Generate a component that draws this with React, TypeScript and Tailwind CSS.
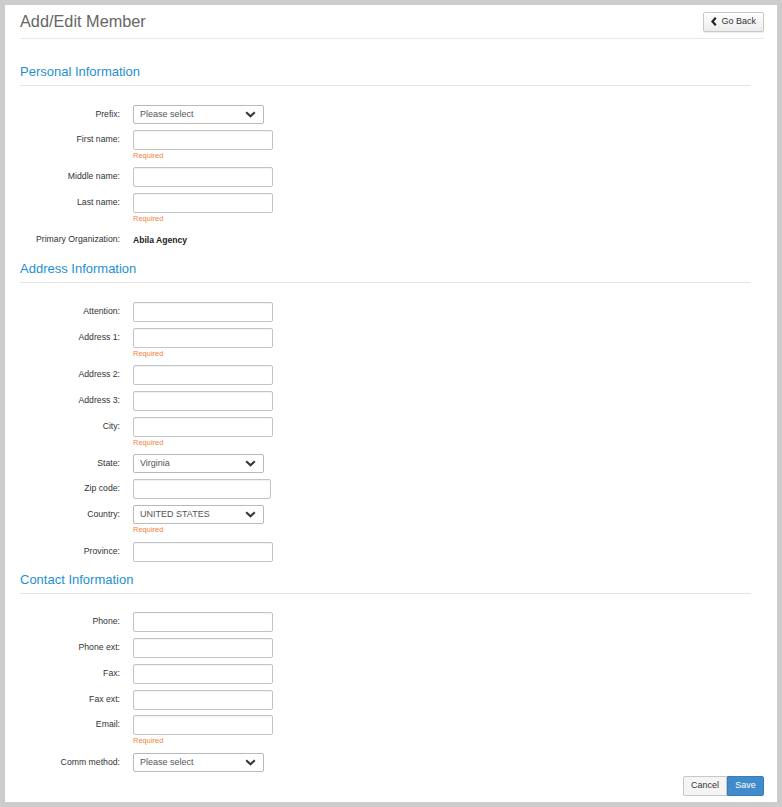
import React from "react";

type Field = {
  label: string;
  kind: "input" | "select" | "static";
  value?: string;
  required?: boolean;
  width?: string;
};

const personal: Field[] = [
  { label: "Prefix:", kind: "select", value: "Please select" },
  { label: "First name:", kind: "input", required: true },
  { label: "Middle name:", kind: "input" },
  { label: "Last name:", kind: "input", required: true },
  { label: "Primary Organization:", kind: "static", value: "Abila Agency" },
];

const address: Field[] = [
  { label: "Attention:", kind: "input" },
  { label: "Address 1:", kind: "input", required: true },
  { label: "Address 2:", kind: "input" },
  { label: "Address 3:", kind: "input" },
  { label: "City:", kind: "input", required: true },
  { label: "State:", kind: "select", value: "Virginia" },
  { label: "Zip code:", kind: "input", width: "w-[138px]" },
  { label: "Country:", kind: "select", value: "UNITED STATES", required: true },
  { label: "Province:", kind: "input" },
];

const contact: Field[] = [
  { label: "Phone:", kind: "input" },
  { label: "Phone ext:", kind: "input" },
  { label: "Fax:", kind: "input" },
  { label: "Fax ext:", kind: "input" },
  { label: "Email:", kind: "input", required: true },
  { label: "Comm method:", kind: "select", value: "Please select" },
];

const Chevron = ({ dir }: { dir: "down" | "left" }) =>
  dir === "down" ? (
    <svg width="11" height="7" viewBox="0 0 11 7" className="shrink-0">
      <path d="M1.2 1.2 L5.5 5.3 L9.8 1.2" fill="none" stroke="#3a3a3a" strokeWidth="2.2" />
    </svg>
  ) : (
    <svg width="6" height="9" viewBox="0 0 6 9" className="shrink-0">
      <path d="M4.8 0.8 L1.4 4.5 L4.8 8.2" fill="none" stroke="#222" strokeWidth="2.2" />
    </svg>
  );

const Row = ({ field }: { field: Field }) => {
  const label = (
    <div className="w-[100px] shrink-0 text-right text-[8.7px] leading-[19px] text-[#333]">{field.label}</div>
  );

  if (field.kind === "static") {
    return (
      <div className="flex h-[20px] mb-[2px] gap-[13px]">
        {label}
        <div className="text-[8.6px] font-bold leading-[20px] text-[#222]">{field.value}</div>
      </div>
    );
  }

  return (
    <div className="flex gap-[13px]">
      {label}
      <div className="flex flex-col">
        {field.kind === "select" ? (
          <div className="mt-[0.5px] flex h-[19px] w-[131px] items-center justify-between rounded-[2px] border border-[#b9b9b9] bg-white pl-[6px] pr-[7px]">
            <span className="text-[9px] text-[#555]">{field.value}</span>
            <Chevron dir="down" />
          </div>
        ) : (
          <div
            className={`h-[20px] ${field.width ?? "w-[140px]"} rounded-[2px] border border-[#c4c4c4] bg-white shadow-[inset_0_1px_1px_rgba(0,0,0,0.06)]`}
          />
        )}
        {field.required && <div className="text-[7.5px] leading-[11.5px] text-[#f5823c]">Required</div>}
      </div>
    </div>
  );
};

const Section = ({ title, fields, className }: { title: string; fields: Field[]; className: string }) => (
  <div className={`mr-[13px] ${className}`}>
    <div className="border-b border-[#e3e3e3] pb-[5px] text-[13px] leading-[16px] text-[#1d8fd3]">{title}</div>
    <div className="flex flex-col gap-[5.75px] pt-[18.75px]">
      {fields.map((f) => (
        <Row key={f.label} field={f} />
      ))}
    </div>
  </div>
);

export default function App() {
  return (
    <div className="min-h-[807px] bg-[#cccccc] p-[5px] font-['Liberation_Sans',Arial,sans-serif]">
      <div className="bg-white pl-[15px] pr-[13px] pb-[6px]">
        <div className="flex h-[34px] items-center justify-between border-b border-[#e8e8e8]">
          <h1 className="text-[16.3px] text-[#666]">Add/Edit Member</h1>
          <button className="flex h-[20px] items-center gap-[4px] rounded-[2px] border border-[#c8c8c8] bg-gradient-to-b from-white to-[#ececec] px-[7px] text-[9px] text-[#333] shadow-[0_1px_1px_rgba(0,0,0,0.08)]">
            <Chevron dir="left" />
            Go Back
          </button>
        </div>

        <Section title="Personal Information" fields={personal} className="mt-[25px]" />
        <Section title="Address Information" fields={address} className="mt-[9px]" />
        <Section title="Contact Information" fields={contact} className="mt-[10px]" />

        <div className="mt-[4px] flex justify-end">
          <button className="h-[20px] w-[44px] rounded-l-[2px] border border-[#c8c8c8] bg-[#f5f5f5] text-[9px] text-[#333]">
            Cancel
          </button>
          <button className="h-[20px] w-[37px] rounded-r-[2px] border border-[#357ebd] bg-[#428bca] text-[9px] text-white">
            Save
          </button>
        </div>
      </div>
    </div>
  );
}
